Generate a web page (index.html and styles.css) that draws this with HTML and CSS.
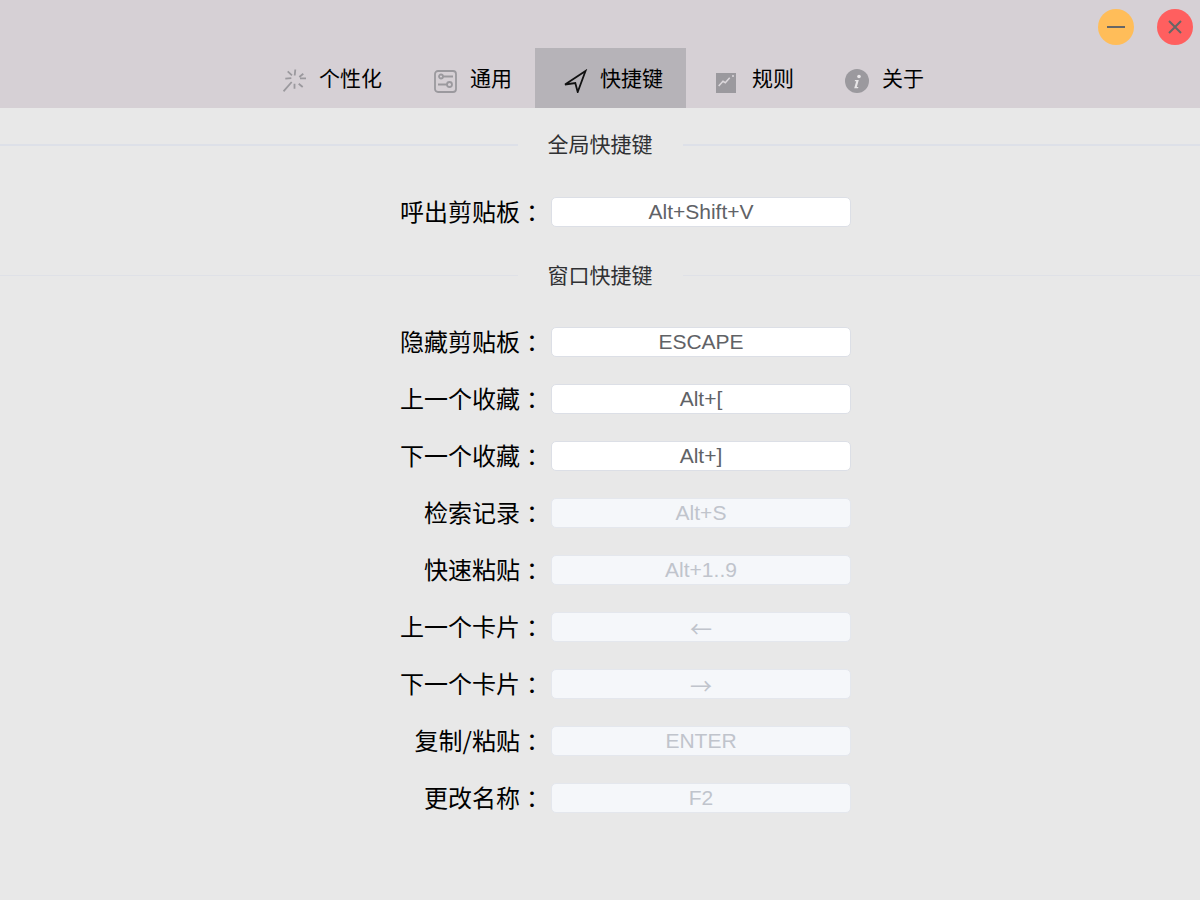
FILE: index.html
```html
<!DOCTYPE html>
<html lang="zh-CN">
<head>
  <meta charset="UTF-8">
  <title>设置</title>
  <link rel="stylesheet" href="styles.css">
</head>
<body>
  <header class="top">
    <div class="win-btns">
      <button class="win-btn min">
        <svg width="18" height="18" viewBox="0 0 18 18"><path d="M0 9h18" stroke="#666" stroke-width="2"/></svg>
      </button>
      <button class="win-btn close">
        <svg width="18" height="18" viewBox="0 0 18 18"><path d="M3 3l12 12M15 3L3 15" stroke="#666" stroke-width="2"/></svg>
      </button>
    </div>
    <nav class="tabs">
      <a class="tab">
        <svg class="tab-icon" viewBox="0 0 24 24" fill="none" stroke="#9b999e" stroke-width="1.800">
          <path d="M12.300 .5l-.6 6M11.500 14.800v5M2.300 9.700l6-.6M17 9.300h6M4.700 2.300L9 6.300M16.300 8l4-3.300M15.700 14.700l4 3.300M8.700 13L.5 22.300"/>
        </svg>
        <span>个性化</span>
      </a>
      <a class="tab">
        <svg class="tab-icon" viewBox="0 0 24 24" fill="none" stroke="#9b999e" stroke-width="1.800">
          <rect x="1" y="2" width="21" height="21" rx="3"/>
          <circle cx="7" cy="7.500" r="2"/><path d="M9 7.500h10M4 15.500h9"/><circle cx="15.500" cy="15.500" r="2.500"/>
        </svg>
        <span>通用</span>
      </a>
      <a class="tab active">
        <svg class="tab-icon" viewBox="0 0 24 24" fill="none" stroke="#111" stroke-width="1.800">
          <path d="M21.500 2L1 15.500l10.300-1.500 2.400 9z" stroke-linejoin="miter"/>
        </svg>
        <span>快捷键</span>
      </a>
      <a class="tab">
        <svg class="tab-icon" viewBox="0 0 24 24">
          <rect x="1" y="4" width="20" height="20" fill="#9b999e"/>
          <path d="M3.700 17L8 12.300l2.300 1.400 4.400-5" fill="none" stroke="#dcd8dc" stroke-width="1.500"/>
          <circle cx="18" cy="7" r="1" fill="#dcd8dc"/>
        </svg>
        <span>规则</span>
      </a>
      <a class="tab">
        <svg class="tab-icon" viewBox="0 0 24 24">
          <circle cx="12" cy="12" r="12" fill="#9b999e"/>
          <circle cx="14" cy="7.500" r="1.800" fill="#e8e6e8"/>
          <path d="M10 11h3.800l-2 7h1.600l-.4 1.300H9.200l2-7H9.700z" fill="#e8e6e8"/>
        </svg>
        <span>关于</span>
      </a>
    </nav>
  </header>

  <main class="content">
    <div class="divider first"><span>全局快捷键</span></div>
    <div class="form">
      <div class="row"><label>呼出剪贴板<i class="colon" lang="zh-TW">：</i></label><input value="Alt+Shift+V" readonly></div>
    </div>

    <div class="divider second"><span>窗口快捷键</span></div>
    <div class="form">
      <div class="row"><label>隐藏剪贴板<i class="colon" lang="zh-TW">：</i></label><input value="ESCAPE" readonly></div>
      <div class="row"><label>上一个收藏<i class="colon" lang="zh-TW">：</i></label><input value="Alt+[" readonly></div>
      <div class="row"><label>下一个收藏<i class="colon" lang="zh-TW">：</i></label><input value="Alt+]" readonly></div>
      <div class="row"><label>检索记录<i class="colon" lang="zh-TW">：</i></label><input value="Alt+S" disabled></div>
      <div class="row"><label>快速粘贴<i class="colon" lang="zh-TW">：</i></label><input value="Alt+1..9" disabled></div>
      <div class="row"><label>上一个卡片<i class="colon" lang="zh-TW">：</i></label><input class="arrow" value="←" disabled></div>
      <div class="row"><label>下一个卡片<i class="colon" lang="zh-TW">：</i></label><input class="arrow" value="→" disabled></div>
      <div class="row"><label>复制/粘贴<i class="colon" lang="zh-TW">：</i></label><input value="ENTER" disabled></div>
      <div class="row"><label>更改名称<i class="colon" lang="zh-TW">：</i></label><input value="F2" disabled></div>
    </div>
  </main>
</body>
</html>
```

FILE: styles.css
```css
* {
  box-sizing: border-box;
}

body {
  margin: 0;
  height: 900px;
  overflow: hidden;
  background-color: #e8e8e8;
  font-family: "Liberation Sans", "Noto Sans CJK SC", sans-serif;
  color: #000;
}

/* Top bar */
.top {
  height: 108px;
  background-color: #d6d0d5;
}

.win-btns {
  height: 48px;
  padding: 9px 7px 0 0;
  display: flex;
  justify-content: flex-end;
  gap: 23px;
}

.win-btn {
  width: 36px;
  height: 36px;
  padding: 0;
  border: none;
  border-radius: 50%;
  display: flex;
  align-items: center;
  justify-content: center;
}

.win-btn.min {
  background-color: #ffbd59;
}

.win-btn.close {
  background-color: #ff5f5f;
}

.tabs {
  height: 60px;
  display: flex;
  justify-content: center;
}

.tab {
  display: flex;
  align-items: center;
  gap: 13px;
  padding: 0 22px 0 29px;
  font-size: 21px;
}

.tab:nth-child(-n+3) {
  gap: 12px;
  padding-right: 23px;
}

.tab span {
  padding-bottom: 2px;
}

.tab.active {
  background-color: #b6b3b8;
}

.tab-icon {
  width: 24px;
  height: 24px;
  margin-top: 6px;
}

/* Section dividers */
.divider {
  height: 1px;
  background-color: #dfe1e7;
  display: flex;
  align-items: center;
  justify-content: center;
}

.divider.first {
  height: 2px;
  margin-top: 36px;
  background-color: #dde0e8;
}

.divider.second {
  margin-top: 48px;
}

.divider span {
  padding: 0 30px 4px;
  background-color: #e8e8e8;
  font-size: 21px;
  color: #303133;
}

/* Form rows */
.form {
  margin-top: 51px;
  display: flex;
  flex-direction: column;
  gap: 27px;
}

.row {
  display: flex;
  height: 30px;
  align-items: center;
  padding-left: 351px;
}

.row label {
  width: 200px;
  padding: 0 7px 2px 0;
  text-align: right;
  font-family: "Noto Sans CJK SC", sans-serif;
  font-size: 24px;
}

.colon {
  font-family: "Noto Sans CJK TC", sans-serif;
  font-style: normal;
  vertical-align: -1px;
}

.row input {
  width: 300px;
  height: 30px;
  padding: 0 15px;
  border: 1px solid #dcdfe6;
  border-radius: 5px;
  background-color: #fff;
  font-family: inherit;
  font-size: 21px;
  color: #606266;
  text-align: center;
  outline: none;
}

.row input:disabled {
  background-color: #f5f7fa;
  border-color: #e4e7ed;
  color: #c0c4cc;
}

.row input.arrow {
  font-family: "Noto Sans CJK SC", sans-serif;
  font-size: 22px;
}
```
